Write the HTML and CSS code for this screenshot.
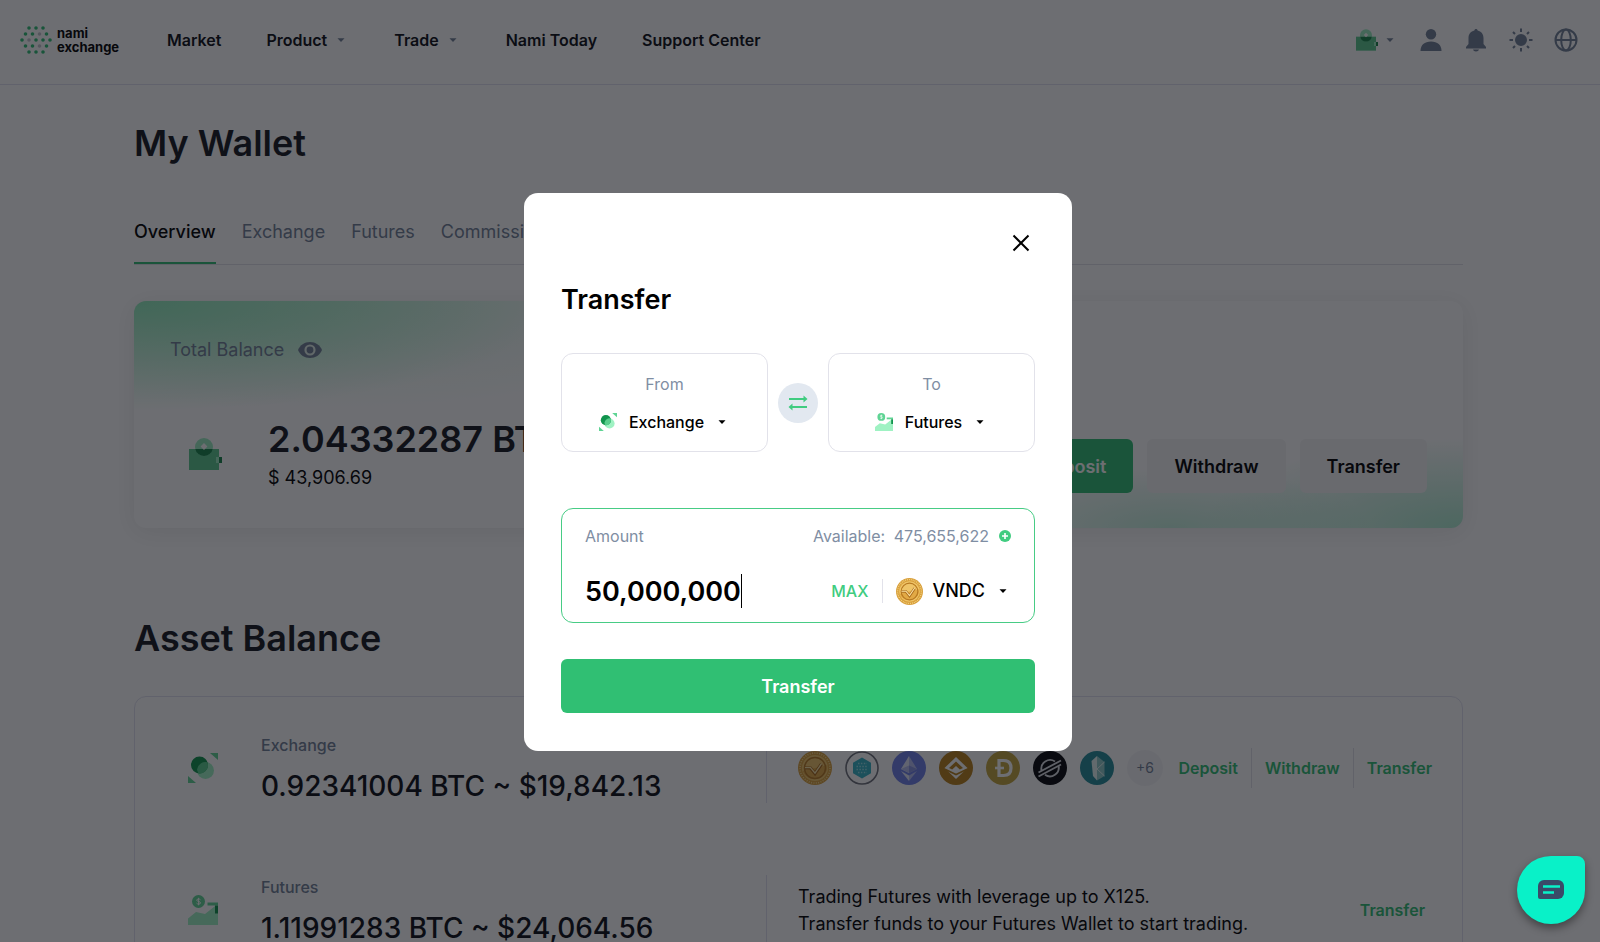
FILE: index.html
```html
<!DOCTYPE html>
<html lang="en">
<head>
  <meta charset="UTF-8">
  <meta name="viewport" content="width=device-width, initial-scale=1.0">
  <title>My Wallet - Nami Exchange</title>
  <link rel="stylesheet" href="styles.css">
</head>
<body>

  <!-- Shared icons -->
  <svg class="sprite" aria-hidden="true">
    <symbol id="caret" viewBox="0 0 16 16"><path d="M4.5 6.2h7L8 10z" fill="currentColor"/></symbol>
    <symbol id="wallet" viewBox="0 0 33 32">
      <path d="M0 11h30v21H0z" fill="#5bc98d"/>
      <circle cx="15" cy="9" r="9" fill="#9beec0"/>
      <path d="M6.2 11h17.6A9 9 0 0 1 6.2 11z" fill="#18854a"/>
      <path d="M15 5l3.4 3.6L15 12l-3.4-3.4z" fill="#fff"/>
      <path d="M27 19h3v6h-3z" fill="#9beec0"/>
      <path d="M30 19h3v6h-3z" fill="#18854a"/>
    </symbol>
    <symbol id="exchange" viewBox="0 0 30 30">
      <circle cx="17.500" cy="17.500" r="8.500" fill="#9ff2c3"/>
      <circle cx="11.500" cy="12" r="8.500" fill="#11944d"/>
      <path d="M9.100 16.200A8.500 8.500 0 0 1 19.500 9.200 8.500 8.500 0 0 1 10.500 20.500 8.500 8.500 0 0 1 9.100 16.200z" fill="#59cd8c"/>
      <path d="M22 0h8v7z" fill="#5fd494"/>
      <path d="M0 23l8 7H0z" fill="#5fd494"/>
    </symbol>
    <symbol id="futures" viewBox="0 0 30 30">
      <path d="M0 23.500L8 17l9 2 9.500-7.500H30V30H0z" fill="#9ff2c3"/>
      <circle cx="10.500" cy="6.500" r="6.500" fill="#5fd494"/>
      <path d="M12.500 4.800c-.6-1.100-3.800-1.200-3.800.4 0 1.700 3.800.8 3.800 2.700 0 1.700-3.400 1.500-4 .2M10.600 2.800v7.500" fill="none" stroke="#fff" stroke-width="1"/>
      <path d="M19.500 7.500H30v3H19.500z" fill="#5fd494"/>
      <path d="M27 10.500h3v8h-3z" fill="#11944d"/>
    </symbol>
    <symbol id="vndc" viewBox="0 0 34 34">
      <circle cx="17" cy="17" r="17" fill="#d9a03c"/>
      <circle cx="17" cy="17" r="15" fill="none" stroke="#f6d98c" stroke-width="1.600" stroke-dasharray="1 1.400"/>
      <circle cx="17" cy="17" r="13" fill="#efc468"/>
      <path d="M4.500 20a13 13 0 0 0 25-6z" fill="#e2a945"/>
      <circle cx="17" cy="17" r="10.500" fill="none" stroke="#b87a22" stroke-width="1.500"/>
      <path d="M7 17h5.500l4.500 5.500 6.500-9.500" fill="none" stroke="#a9691a" stroke-width="3.200"/>
      <path d="M7 16.600h5.500l4.500 5.500 6.500-9.500" fill="none" stroke="#fbe3a4" stroke-width="1.400"/>
    </symbol>
  </svg>

  <header class="header">
    <a href="#" class="logo">
      <svg width="32" height="30" viewBox="0 0 32 30" fill="#2fbf73">
        <circle cx="9" cy="3" r="1.800"/><circle cx="16" cy="3" r="1.800"/><circle cx="23" cy="3" r="1.800"/>
        <circle cx="5.500" cy="9" r="1.800"/><circle cx="12.500" cy="9" r="1.800"/><circle cx="19.500" cy="9" r="1.800" fill="#c4c4cc"/><circle cx="26.500" cy="9" r="1.800"/>
        <circle cx="2" cy="15" r="1.800"/><circle cx="9" cy="15" r="1.800" fill="#c4c4cc"/><circle cx="16" cy="15" r="1.800"/><circle cx="23" cy="15" r="1.800"/><circle cx="30" cy="15" r="1.800"/>
        <circle cx="5.500" cy="21" r="1.800"/><circle cx="12.500" cy="21" r="1.800"/><circle cx="19.500" cy="21" r="1.800" fill="#c4c4cc"/><circle cx="26.500" cy="21" r="1.800"/>
        <circle cx="9" cy="27" r="1.800"/><circle cx="16" cy="27" r="1.800"/><circle cx="23" cy="27" r="1.800"/>
      </svg>
      <span>nami<br>exchange</span>
    </a>
    <nav class="nav">
      <a href="#">Market</a>
      <a href="#">Product <svg class="caret"><use href="#caret"/></svg></a>
      <a href="#">Trade <svg class="caret"><use href="#caret"/></svg></a>
      <a href="#">Nami Today</a>
      <a href="#">Support Center</a>
    </nav>
    <div class="tools">
      <button type="button" class="wallet-btn" aria-label="Wallet">
        <svg width="22" height="22"><use href="#wallet"/></svg>
        <svg class="caret"><use href="#caret"/></svg>
      </button>
      <button type="button" aria-label="Profile">
        <svg width="24" height="24" viewBox="0 0 24 24" fill="currentColor"><circle cx="12" cy="6.200" r="5.200"/><path d="M1.500 23c0-6 4-9.500 10.500-9.500S22.500 17 22.500 23z"/></svg>
      </button>
      <button type="button" aria-label="Notifications">
        <svg width="24" height="24" viewBox="0 0 24 24" fill="currentColor"><path d="M12 1c.8 0 1.500.6 1.600 1.400C17.300 3.200 19.500 6 19.500 10v6l2.500 3v1.500H2V19l2.500-3v-6c0-4 2.200-6.800 5.900-7.600C10.500 1.600 11.200 1 12 1zM9 21.500h6c-.3 1.200-1.500 2-3 2s-2.700-.8-3-2z"/></svg>
      </button>
      <button type="button" aria-label="Theme">
        <svg width="24" height="24" viewBox="0 0 24 24" fill="currentColor" stroke="currentColor" stroke-width="2"><circle cx="12" cy="12" r="5"/><path d="M12 .5V4M12 20v3.500M.5 12H4M20 12h3.500M4 4l2 2M18 18l2 2M20 4l-2 2M6 18l-2 2"/></svg>
      </button>
      <button type="button" aria-label="Language">
        <svg width="24" height="24" viewBox="0 0 24 24" fill="none" stroke="currentColor" stroke-width="2"><circle cx="12" cy="12" r="10.500"/><ellipse cx="12" cy="12" rx="4.800" ry="10.500"/><path d="M1.500 12h21"/></svg>
      </button>
    </div>
  </header>

  <main class="page">
    <h1>My Wallet</h1>

    <nav class="tabs">
      <a href="#" class="active">Overview</a>
      <a href="#">Exchange</a>
      <a href="#">Futures</a>
      <a href="#">Commission</a>
    </nav>

    <section class="balance-card">
      <div class="balance-label">
        Total Balance
        <button type="button" aria-label="Hide balance">
          <svg width="24" height="16" viewBox="0 0 24 16"><path d="M0 8c2-5 6.500-8 12-8s10 3 12 8c-2 5-6.500 8-12 8S2 13 0 8z" fill="currentColor"/><circle cx="12" cy="8" r="4.500" fill="currentColor" stroke="#e0efe8" stroke-width="2.200"/></svg>
        </button>
      </div>
      <div class="balance-row">
        <svg class="balance-icon" width="33" height="32"><use href="#wallet"/></svg>
        <div class="balance-amount">
          <p class="btc">2.04332287 BTC</p>
          <p class="usd">$ 43,906.69</p>
        </div>
        <div class="balance-actions">
          <button type="button" class="btn btn-primary">Deposit</button>
          <button type="button" class="btn">Withdraw</button>
          <button type="button" class="btn">Transfer</button>
        </div>
      </div>
    </section>

    <h2>Asset Balance</h2>

    <section class="assets">
      <div class="asset">
        <svg class="asset-icon"><use href="#exchange"/></svg>
        <div class="asset-info">
          <p class="asset-name">Exchange</p>
          <p class="asset-amount">0.92341004 BTC ~ $19,842.13</p>
        </div>
        <div class="asset-detail">
          <div class="coins">
            <svg viewBox="0 0 34 34"><use href="#vndc"/></svg>
            <svg viewBox="0 0 34 34">
              <circle cx="17" cy="17" r="16" fill="none" stroke="#6f717a" stroke-width="1.600"/>
              <path d="M17 6.500l9 5.200v10.600l-9 5.200-9-5.200V11.700z" fill="#36b3c6"/>
              <path d="M13 12.500h9M11.500 15.500h11M11.500 18.500h11M13 21.500h9" stroke="#93dfe6" stroke-width="1.400" stroke-dasharray="1.500 1.400"/>
            </svg>
            <svg viewBox="0 0 34 34">
              <circle cx="17" cy="17" r="17" fill="#6f80e8"/>
              <path d="M17 5l-8 13 8 4z" fill="#e2e5fb"/><path d="M17 5l8 13-8 4z" fill="#b3bcf0"/>
              <path d="M9 18l8-3.500V22z" fill="#b3bcf0"/><path d="M25 18l-8-3.500V22z" fill="#8793e0"/>
              <path d="M9 20l8 4.600V30z" fill="#e2e5fb"/><path d="M25 20l-8 4.600V30z" fill="#b3bcf0"/>
            </svg>
            <svg viewBox="0 0 34 34">
              <circle cx="17" cy="17" r="17" fill="#b8801a"/>
              <path d="M17 6L5.500 17 17 28l11.500-11z" fill="#fff"/>
              <path d="M17 10.500L10 17l3.200 1.500L17 15l3.800 3.500L24 17z" fill="#b8801a"/>
              <path d="M6 18.200l11 5.300 11-5.300" fill="none" stroke="#b8801a" stroke-width="1.600"/>
            </svg>
            <svg viewBox="0 0 34 34">
              <circle cx="17" cy="17" r="17" fill="#c4a63e"/>
              <path d="M13 9.500h4.500c5 0 7.500 3 7.500 7.500s-2.500 7.500-7.500 7.500H13z" fill="none" stroke="#fff" stroke-width="3.200"/>
              <path d="M9 17h9" stroke="#fff" stroke-width="2.600"/>
            </svg>
            <svg viewBox="0 0 34 34">
              <circle cx="17" cy="17" r="17" fill="#05060a"/>
              <path d="M8.500 19.500a8.800 8.800 0 0 1 13.500-9M25.500 14.500A8.800 8.800 0 0 1 12 23.800M5.500 21.500L28 9.500M5.500 25.500L28 13.500" fill="none" stroke="#d9dbe2" stroke-width="1.900"/>
            </svg>
            <svg viewBox="0 0 34 34">
              <circle cx="17" cy="17" r="17" fill="#248c98"/>
              <path d="M17 5l-5.500 5 1.500 15 4 4.500z" fill="#e3f4f3"/>
              <path d="M17 5l7.500 6v14L17 29.500z" fill="#8fcac9"/>
              <path d="M24.500 11L17 18l7.500 7" fill="none" stroke="#e3f4f3" stroke-width="1"/>
            </svg>
            <span class="more">+6</span>
          </div>
          <div class="asset-links">
            <a href="#">Deposit</a>
            <a href="#">Withdraw</a>
            <a href="#">Transfer</a>
          </div>
        </div>
      </div>

      <div class="asset">
        <svg class="asset-icon"><use href="#futures"/></svg>
        <div class="asset-info">
          <p class="asset-name">Futures</p>
          <p class="asset-amount">1.11991283 BTC ~ $24,064.56</p>
        </div>
        <div class="asset-detail">
          <p class="asset-text">Trading Futures with leverage up to X125.<br>Transfer funds to your Futures Wallet to start trading.</p>
          <div class="asset-links single">
            <a href="#">Transfer</a>
          </div>
        </div>
      </div>
    </section>
  </main>

  <div class="overlay">
    <form class="modal" role="dialog" aria-labelledby="modalTitle">
      <button type="button" class="close" aria-label="Close">
        <svg width="24" height="24" viewBox="0 0 24 24" fill="none" stroke="currentColor" stroke-width="2"><path d="M4.500 4.500l15 15M19.500 4.500l-15 15"/></svg>
      </button>
      <h3 id="modalTitle">Transfer</h3>

      <div class="direction">
        <div class="wallet-box">
          <label for="from">From</label>
          <div class="picker">
            <svg class="picker-icon"><use href="#exchange"/></svg>
            <select id="from"><option>Exchange</option></select>
            <svg class="caret"><use href="#caret"/></svg>
          </div>
        </div>
        <button type="button" class="swap" aria-label="Swap wallets">
          <svg width="20" height="16" viewBox="0 0 20 16" fill="none" stroke="currentColor" stroke-width="1.800"><path d="M1 4h17M2 12h17"/><path d="M15.500 .5L19.500 4l-4 3.500zM4.500 8.500L.5 12l4 3.500z" fill="currentColor" stroke="none"/></svg>
        </button>
        <div class="wallet-box">
          <label for="to">To</label>
          <div class="picker">
            <svg class="picker-icon"><use href="#futures"/></svg>
            <select id="to"><option>Futures</option></select>
            <svg class="caret"><use href="#caret"/></svg>
          </div>
        </div>
      </div>

      <div class="amount-box">
        <div class="amount-head">
          <label for="amount">Amount</label>
          <span class="available">Available: <span>475,655,622</span></span>
          <button type="button" class="add" aria-label="Add funds">
            <svg width="12" height="12" viewBox="0 0 12 12"><circle cx="6" cy="6" r="6" fill="#40cc80"/><path d="M6 3v6M3 6h6" stroke="#fff" stroke-width="1.600"/></svg>
          </button>
        </div>
        <div class="amount-row">
          <input type="text" id="amount" value="50,000,000">
          <span class="cursor"></span>
          <button type="button" class="max">MAX</button>
          <div class="coin-picker">
            <svg class="coin"><use href="#vndc"/></svg>
            <select aria-label="Coin"><option>VNDC</option></select>
            <svg class="caret"><use href="#caret"/></svg>
          </div>
        </div>
      </div>

      <button type="submit" class="btn btn-primary">Transfer</button>
    </form>
  </div>

  <button type="button" class="chat" aria-label="Chat">
    <svg width="26" height="20" viewBox="0 0 26 20"><path d="M6 0h14a6 6 0 0 1 6 6v7a6 6 0 0 1-6 6H2a2 2 0 0 1-2-2V6a6 6 0 0 1 6-6z" fill="#3a4a68"/><path d="M5 6.500h17M5 12.500h11" stroke="#09f1c8" stroke-width="2.600"/></svg>
  </button>

</body>
</html>
```
FILE: styles.css
```css
* {
  box-sizing: border-box;
}
body {
  margin: 0;
  height: 100vh;
  overflow: hidden;
  font-family: Inter, sans-serif;
  font-size: 16px;
  color: #000;
  background-color: #fff;
}
h1, h2, h3, p {
  margin: 0;
}
a {
  color: inherit;
  text-decoration: none;
}
button, input, select {
  font-family: inherit;
  color: inherit;
  border: none;
  padding: 0;
  background: none;
}
button {
  cursor: pointer;
}
svg {
  display: block;
  flex-shrink: 0;
}
.sprite {
  display: none;
}
.caret {
  width: 16px;
  height: 16px;
}

/* Header */
.header {
  display: flex;
  align-items: center;
  height: 85px;
  padding: 0 22px 4px 20px;
  border-bottom: 1px solid #e2e2f0;
}
.logo {
  display: flex;
  align-items: center;
  gap: 5px;
  width: 147px;
  font-size: 13px;
  font-weight: 700;
  line-height: 14px;
}
.nav {
  display: flex;
  gap: 45px;
  font-weight: 600;
  color: #0c0e14;
}
.nav a {
  display: flex;
  align-items: center;
  gap: 6px;
}
.nav .caret {
  color: #718096;
}
.tools {
  display: flex;
  align-items: center;
  gap: 21px;
  margin-left: auto;
  color: #718096;
}
.wallet-btn {
  display: flex;
  align-items: center;
  gap: 4px;
}

/* Page */
.page {
  padding: 33px 137px 0 134px;
}
h1, h2 {
  font-size: 36px;
  font-weight: 600;
  line-height: 50px;
  color: #16181e;
}
.tabs {
  display: flex;
  gap: 26px;
  margin-top: 48px;
  border-bottom: 1px solid #e2e2e8;
  font-size: 18px;
  line-height: 32px;
  color: #718096;
}
.tabs a {
  padding-bottom: 14px;
  border-bottom: 2px solid transparent;
}
.tabs .active {
  color: #000;
  font-weight: 500;
  border-color: #30bf73;
}

/* Total balance */
.balance-card {
  margin-top: 36px;
  padding: 36px;
  height: 227px;
  border-radius: 12px;
  background-color: #fff;
  background-image:
    radial-gradient(ellipse 420px 110px at 0 0, rgba(94, 230, 158, 0.65), rgba(94, 230, 158, 0)),
    radial-gradient(ellipse 400px 110px at 15% 0, rgba(150, 230, 185, 0.25), rgba(150, 230, 185, 0)),
    radial-gradient(ellipse 260px 90px at 100% 100%, rgba(94, 220, 165, 0.5), rgba(94, 220, 165, 0)),
    radial-gradient(ellipse 200px 60px at 78% 100%, rgba(94, 220, 165, 0.35), rgba(94, 220, 165, 0));
  box-shadow: 0 4px 24px rgba(0, 0, 0, 0.08);
}
.balance-label {
  display: flex;
  align-items: center;
  gap: 14px;
  font-size: 18px;
  line-height: 26px;
  color: #718096;
}
.balance-row {
  display: flex;
  align-items: center;
  margin-top: 52px;
}
.balance-icon {
  margin: 0 46px 0 19px;
}
.btc {
  font-size: 36px;
  font-weight: 600;
  line-height: 48px;
  color: #16181e;
}
.usd {
  font-size: 18px;
  line-height: 30px;
}
.balance-actions {
  display: flex;
  align-self: flex-end;
  gap: 14px;
  margin-left: auto;
}
.btn {
  height: 54px;
  padding: 0 27px;
  border-radius: 6px;
  font-size: 18px;
  font-weight: 600;
  background-color: #f4f4f5;
}
.btn-primary {
  color: #fff;
  background-color: #30bf73;
}

/* Asset balance */
h2 {
  margin-top: 85px;
}
.assets {
  margin-top: 33px;
  border: 1px solid #e2e2f0;
  border-radius: 12px;
  padding-top: 36px;
}
.asset {
  display: flex;
  align-items: center;
  height: 70px;
  margin-bottom: 72px;
}
.asset-icon {
  width: 30px;
  height: 30px;
  margin: 0 43px 0 53px;
}
.asset-info {
  width: 505px;
}
.asset-name {
  font-weight: 500;
  line-height: 24px;
  color: #718096;
}
.asset-amount {
  margin-top: 11px;
  font-size: 28px;
  font-weight: 500;
  line-height: 36px;
  color: #0c0e14;
}
.asset-detail {
  flex: 1;
  display: flex;
  align-items: center;
  justify-content: space-between;
  align-self: stretch;
  padding: 0 30px 0 31px;
  border-left: 1px solid #e2e2f0;
}
.coins {
  display: flex;
  align-items: center;
  gap: 13px;
}
.coins svg {
  width: 34px;
  height: 34px;
}
.more {
  width: 36px;
  border-radius: 50%;
  font-size: 14px;
  line-height: 36px;
  text-align: center;
  color: #718096;
  background-color: #f6f6f8;
}
.asset-links {
  display: flex;
  font-weight: 600;
  line-height: 40px;
  color: #30bf73;
}
.asset-links a + a {
  margin-left: 13px;
  padding-left: 13px;
  border-left: 1px solid #e2e2e8;
}
.asset-links.single {
  padding-right: 7px;
}
.asset-text {
  font-size: 18px;
  line-height: 27px;
}

/* Transfer modal */
.overlay {
  position: fixed;
  inset: 0;
  display: flex;
  align-items: center;
  justify-content: center;
  padding: 2px 4px 0 0;
  background-color: rgba(12, 13, 20, 0.6);
}
.modal {
  display: flex;
  flex-direction: column;
  width: 548px;
  padding: 38px 37px;
  border-radius: 14px;
  background-color: #fff;
}
.close {
  align-self: flex-end;
  margin-right: 2px;
}
h3 {
  margin-top: 27px;
  font-size: 27px;
  font-weight: 600;
  line-height: 36px;
}
.direction {
  display: flex;
  align-items: center;
  justify-content: space-between;
  margin-top: 35px;
}
.wallet-box {
  width: 207px;
  height: 99px;
  padding: 18px 0;
  border: 1px solid #e2e2ea;
  border-radius: 12px;
  text-align: center;
}
.wallet-box label {
  display: block;
  line-height: 24px;
  color: #7f8ea3;
}
.picker {
  display: flex;
  align-items: center;
  justify-content: center;
  margin-top: 14px;
}
.picker-icon {
  width: 18px;
  height: 18px;
}
select {
  appearance: none;
  field-sizing: content;
  font-size: 16px;
  font-weight: 500;
  line-height: 24px;
}
.picker select {
  margin: 0 10px 0 12px;
}
.swap {
  display: flex;
  align-items: center;
  justify-content: center;
  width: 40px;
  height: 40px;
  border-radius: 50%;
  color: #40cc80;
  background-color: #e2e8f0;
}
.amount-box {
  height: 115px;
  margin-top: 56px;
  padding: 15px 23px;
  border: 1px solid #47cc85;
  border-radius: 12px;
}
.amount-head {
  display: flex;
  align-items: center;
  line-height: 24px;
  color: #7f8ea3;
}
.available {
  margin-left: auto;
}
.available span {
  margin-left: 4px;
}
.add {
  margin-left: 10px;
}
.amount-row {
  display: flex;
  align-items: center;
  margin-top: 26px;
}
#amount {
  field-sizing: content;
  height: 34px;
  font-size: 27px;
  font-weight: 600;
  outline: none;
}
.cursor {
  width: 1px;
  height: 34px;
  background-color: #000;
}
.max {
  margin-left: auto;
  font-size: 16px;
  font-weight: 500;
  color: #40cc80;
}
.coin-picker {
  display: flex;
  align-items: center;
  height: 24px;
  margin-left: 14px;
  padding-left: 13px;
  border-left: 1px solid #e2e2ea;
}
.coin {
  width: 27px;
  height: 27px;
}
.coin-picker select {
  margin: 0 10px 0 9px;
  font-size: 18px;
}
.modal .btn {
  margin-top: 36px;
}

/* Chat bubble */
.chat {
  position: fixed;
  right: 15px;
  bottom: 18px;
  display: flex;
  align-items: center;
  justify-content: center;
  width: 68px;
  height: 68px;
  border-radius: 50%;
  border-top-right-radius: 8px;
  background-color: #09f1c8;
  box-shadow: 0 4px 8px rgba(0, 0, 0, 0.4);
}
```
